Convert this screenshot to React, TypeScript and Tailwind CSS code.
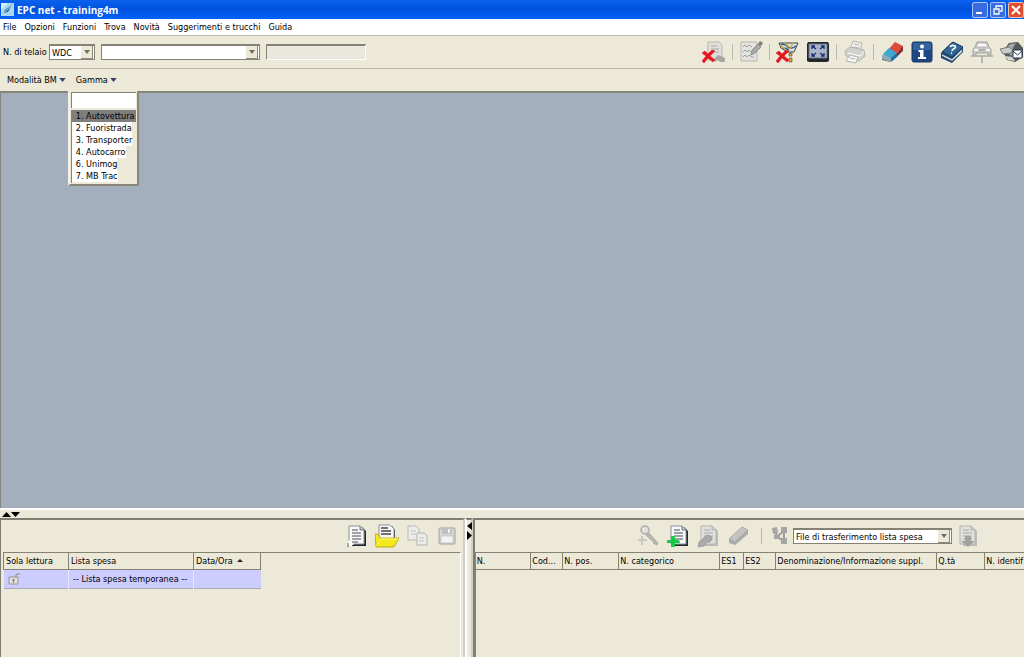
import { ReactNode } from "react";

const menuItems = ["File", "Opzioni", "Funzioni", "Trova", "Novità", "Suggerimenti e trucchi", "Guida"];

const ranges = ["1. Autovettura", "2. Fuoristrada", "3. Transporter", "4. Autocarro", "6. Unimog", "7. MB Trac"];

const partColumns = [
  { label: "N.", width: "w-[55px]" },
  { label: "Cod...", width: "w-[32px]" },
  { label: "N. pos.", width: "w-[56px]" },
  { label: "N. categorico", width: "w-[101px]" },
  { label: "ES1", width: "w-[24px]" },
  { label: "ES2", width: "w-[32px]" },
  { label: "Denominazione/Informazione suppl.", width: "w-[161px]" },
  { label: "Q.tà", width: "w-[48px]" },
  { label: "N. identif", width: "" },
];

function IconButton({ label, children }: { label: string; children: ReactNode }) {
  return (
    <button aria-label={label} className="size-6 shrink-0">
      <svg viewBox="0 0 24 24" className="size-6" fill="none">
        {children}
      </svg>
    </button>
  );
}

function Separator() {
  return <div className="h-4 w-px shrink-0 bg-[#bdbaad]" />;
}

function RedCross() {
  return (
    <path
      d="M0 13l3-2 3 3 4-4 3 1-5 5 5 4-2 2-5-4-4 5-2-2 4-5z"
      fill="#e8141c"
      stroke="#e8141c"
      strokeWidth="0.5"
    />
  );
}

function PageShape({ faded = false }: { faded?: boolean }) {
  const ink = faded ? "#a9a9a9" : "#4b4b4b";
  return (
    <>
      <path d="M6 3h11l4 4v15H7z" fill={faded ? "#bcbcb8" : "#25282c"} />
      <path d="M4 2h11l4 4v14H4z" fill={faded ? "#e0e0de" : "#f6f8fa"} stroke={faded ? "#b4b4b0" : "#8b9299"} />
      <path d="M15 2v4h4" fill="#c9cdd1" stroke={ink} strokeWidth="0.7" />
      <path d="M7 6h6M7 9h9M7 12h9M7 15h9M7 18h6" stroke={ink} strokeWidth="1.2" />
    </>
  );
}

function ComboArrow() {
  return (
    <span className="pointer-events-none absolute top-0.5 right-0.5 bottom-px flex w-3 items-center justify-center border-r border-b border-[#8c897b] bg-[#ece9d8]">
      <svg viewBox="0 0 6 4" className="h-1 w-1.5">
        <path d="M0 0h6L3 4z" fill="#716e62" />
      </svg>
    </span>
  );
}

type ComboProps = { id: string; label: string; value: string; className: string };

function Combo({ id, label, value, className }: ComboProps) {
  return (
    <div className={`relative h-4 shrink-0 ${className}`}>
      <select
        id={id}
        aria-label={label}
        defaultValue={value}
        className="h-full w-full appearance-none border border-t-2 border-[#858274] bg-white pr-3 pl-0.5 leading-3"
      >
        <option value={value}>{value}</option>
      </select>
      <ComboArrow />
    </div>
  );
}

function DownTriangle() {
  return (
    <svg viewBox="0 0 8 5" className="h-1 w-[7px]">
      <path d="M0 0h8L4 5z" fill="#38406b" />
    </svg>
  );
}

function TitleBar() {
  return (
    <header className="flex h-[19px] shrink-0 items-center bg-linear-to-b from-[#0a62ee] via-[#0052dd] to-[#0262fb] pl-px">
      <svg viewBox="0 0 13 13" className="size-[13px]">
        <path d="M0 0h13v13H0z" fill="#a9d9ee" />
        <path d="M0 7L7 0H0z" fill="#d5f1f8" />
        <path d="M2 12l2-5 7-6-4 8-3 1z" fill="#1c6aa8" />
        <path d="M2 12l8-10" stroke="#ecfaff" strokeWidth="0.7" />
      </svg>
      <h1 className="ml-[3px] font-['Open_Sans','DejaVu_Sans',sans-serif] text-[10px] font-bold text-white">
        EPC net - training4m
      </h1>
      <div className="ml-auto flex gap-0.5">
        <button aria-label="Riduci a icona" className="size-4 rounded-xs border border-[#a9c4f8] bg-[#3a6be0]">
          <svg viewBox="0 0 14 14">
            <path d="M3 9h6v2H3z" fill="#fff" />
          </svg>
        </button>
        <button aria-label="Ripristina" className="size-4 rounded-xs border border-[#a9c4f8] bg-[#3a6be0]">
          <svg viewBox="0 0 14 14" fill="none" stroke="#fff" strokeWidth="1.3">
            <path d="M5 5V3h6v5H9" />
            <path d="M3 6h5v5H3z" />
          </svg>
        </button>
        <button aria-label="Chiudi" className="size-4 rounded-xs border border-[#f0c0ac] bg-[#df5030]">
          <svg viewBox="0 0 14 14" stroke="#fff" strokeWidth="2">
            <path d="M3 3l8 8M11 3l-8 8" />
          </svg>
        </button>
      </div>
    </header>
  );
}

function MainIcons() {
  return (
    <div className="ml-auto flex items-center gap-1.5">
      <IconButton label="Elimina documento">
        <path d="M6 2h11l3 3v15H6z" fill="#dededb" stroke="#b8b8b4" />
        <path d="M9 6h6M9 9h8M9 12h8" stroke="#aaa" />
        <path d="M12 19l4-4 3 1 4 2v4h-5l-2-2-3 2z" fill="#a7a7a6" />
        <RedCross />
      </IconButton>
      <Separator />
      <IconButton label="Modifica nota">
        <path d="M2 2h16v19H2z" fill="#e3e3e1" stroke="#b7b7b4" />
        <path d="M4 7l2-2 2 2 2-2 3 2M4 12l2-2 2 2 2-2 2 2M4 17l2-2 2 2 2-2 3 2h2" stroke="#9e9e9b" />
        <path d="M12 15l1-5 6-6 3 3-6 6z" fill="#a9a9a9" stroke="#858585" strokeWidth="0.8" />
        <path d="M19 4l2-3 3 2-2 3z" fill="#7b7b7b" />
      </IconButton>
      <Separator />
      <IconButton label="Elimina filtro">
        <path d="M3 3h19l-3 6-4 4h-5L6 9z" fill="#d8e0e4" />
        <path d="M3 3h19l-4 9h-6L5 8z" stroke="#3b4652" />
        <path d="M5 5c3-2 5 0 7 2s4 2 8-1M7 9c2-2 4 0 6 1" stroke="#2b5c8e" strokeWidth="1.5" />
        <path d="M4 5l5 4M17 3l-3 6M9 3l4 4" stroke="#d6b02d" strokeWidth="1.3" />
        <path d="M13 13h3v3h-3zM13 18h3v4h-3z" fill="#d7a62f" stroke="#4c4b3d" strokeWidth="0.6" />
        <RedCross />
      </IconButton>
      <IconButton label="Schermo intero">
        <path d="M2 2h20l1 2v17l-2 1H3l-2-1V4z" fill="#23262b" />
        <path d="M3 4h18v14H3z" fill="#aab5c9" stroke="#697386" />
        <path
          d="M10 9L6 6M6 9V6h3M14 9l4-3M15 6h3v3M10 13l-4 3M6 13v3h3M14 13l4 3M15 16h3v-3"
          stroke="#18316b"
          strokeWidth="1.3"
        />
      </IconButton>
      <Separator />
      <IconButton label="Stampa">
        <path d="M10 1l9 2-2 8-10-2z" fill="#efefed" stroke="#b4b4b1" />
        <path d="M2 11l5-4 14 3 1 6-6 5-13-5z" fill="#d2d2cf" stroke="#b4b4b1" />
        <path d="M5 13l12 3 4-4" stroke="#fff" />
        <path d="M7 15l8 2-2 6-10-2z" fill="#f4f4f2" stroke="#b4b4b1" />
        <path d="M11 4l5 1M10 7l6 1M7 18l5 1" stroke="#b4b4b1" />
      </IconButton>
      <Separator />
      <IconButton label="Cancella">
        <path d="M2 17L15 3l8 4v4L10 22l-8-2z" fill="#686b70" />
        <path d="M9 9l6-7 8 4-6 8z" fill="#dc4b3d" />
        <path d="M17 14l6-8v4l-6 7z" fill="#8d2928" />
        <path d="M3 14l6-6 8 5-6 6z" fill="#3caad0" />
        <path d="M17 13v4l-6 5v-4z" fill="#246ca2" />
        <path d="M3 14l8 4v4l-9-3v-3z" fill="#8fa9b8" />
      </IconButton>
      <IconButton label="Informazioni">
        <rect x="2" y="2" width="20" height="20" rx="2" fill="#1c4784" stroke="#183866" />
        <path d="M3 3h18v7H3z" fill="#35639e" />
        <circle cx="12" cy="6.5" r="2" fill="#fff" />
        <path d="M8.500 10h5v7H16v2H8v-2h2v-5H8.500z" fill="#fff" />
      </IconButton>
      <IconButton label="Guida">
        <path d="M1 13L12 2l11 5v5L12 23 1 18z" fill="#1e4672" />
        <path d="M2 14l10 5L22 9v3l-10 9-10-5z" fill="#e4e9ed" stroke="#4e5f70" strokeWidth="0.6" />
        <path d="M2 12L13 2l10 5-11 10z" fill="#326795" stroke="#193d62" />
        <path d="M10 7c2-3 7-1 5 1-1 1-3 1-3 3M11 13h1" stroke="#fff" strokeWidth="1.6" />
      </IconButton>
      <IconButton label="Veicolo">
        <path d="M7 2h10l2 5 2 2v6h-3v-2H6v2H3V9l2-2z" fill="#c9c9c6" stroke="#a2a29f" />
        <path d="M8 3h8l2 4H6z" fill="#f7f7f5" stroke="#aaa" strokeWidth="0.7" />
        <path d="M4 9h4v2H4zM16 9h4v2h-4z" fill="#f4f4f2" />
        <path d="M9 10h6" stroke="#8e8e8b" />
        <path d="M1 16h22M12 16v7" stroke="#aaa9a5" strokeWidth="1.6" />
      </IconButton>
      <IconButton label="Invia">
        <path d="M9 3l9-1 5 6v9l-8 5-8-2-4-9z" fill="#565957" />
        <path d="M10 4l6-1-3 5v9l-4-3-4-5z" fill="#a9adac" stroke="#70726f" />
        <path d="M0 9l9-2 4 3-2 3-8 1z" fill="#c9ccca" stroke="#777a77" />
        <path d="M5 16l8 1 2 4-7-1z" fill="#d5d7d5" />
        <path d="M13 10h9v8h-9z" fill="#fff" stroke="#263752" />
        <path d="M13 11l4.500 4 4.500-4" stroke="#263752" />
      </IconButton>
    </div>
  );
}

function RangeMenu() {
  return (
    <div className="absolute top-full left-0 z-10 w-[71px] border-2 border-t-0 border-[#f4f2e7] border-r-[#8a8778] border-b-[#8a8778] bg-[#ece9d8] p-px">
      <input
        aria-label="Filtro gamma"
        className="block h-4 w-full border-t border-l border-[#858274] bg-white"
      />
      <ul className="mt-0.5 border-l border-[#858274] pb-px">
        {ranges.map((range, index) => (
          <li key={range} className={`flex h-3 ${index === 0 ? "bg-[#7e7e7e]" : ""}`}>
            <button className={`h-3 pl-1 leading-3 whitespace-nowrap ${index === 0 ? "" : "bg-white"}`}>
              {range}
            </button>
          </li>
        ))}
      </ul>
    </div>
  );
}

function ShoppingLists() {
  return (
    <section className="flex min-w-0 flex-[5] flex-col border-t-2 border-r-2 border-l border-[#807e73] border-r-[#d0cfc6] pr-0.5 pl-0.5">
      <div className="flex h-8 shrink-0 items-center justify-end gap-1.5 pr-0.5">
        <IconButton label="Nuova lista">
          <PageShape />
          <path d="M1 22l3-6 2 2 3 2-3 2z" fill="#fff" />
          <path d="M3 21v-2M2 22h2" stroke="#555" />
        </IconButton>
        <IconButton label="Apri lista">
          <path d="M6 2h11l3 4v14H6z" fill="#25282c" />
          <path d="M4 1h11l4 4v14H4z" fill="#f5f7fa" stroke="#8b9299" />
          <path d="M6 4h7M6 7h10M6 10h10" stroke="#444" strokeWidth="1.3" />
          <path d="M0 10h3l2 4h19l-5 9H1z" fill="#f1e91c" stroke="#bcae1c" />
          <path d="M2 21l4-6h17" stroke="#fffa78" />
        </IconButton>
        <IconButton label="Copia">
          <path d="M3 2h8l3 3v11H3z" fill="#ecedeb" stroke="#bbbbb8" />
          <path d="M12 9h7l3 3v9H12z" fill="#ecedeb" stroke="#b4b4b1" />
          <path d="M6 7h5M6 10h5M14 14h5M14 17h5" stroke="#c1c1be" />
        </IconButton>
        <IconButton label="Salva">
          <rect x="4" y="4" width="16" height="16" rx="1" fill="#d6d6d4" stroke="#a1a19e" />
          <path d="M7 4h10v6H7z" fill="#bfc1c0" />
          <path d="M13 5h2v4h-2z" fill="#f1f1f0" />
          <path d="M6 12h12v7H6z" fill="#f2f2f1" stroke="#bdbdbb" strokeWidth="0.7" />
        </IconButton>
      </div>
      <div className="flex-1 border-t border-r border-[#858274] border-r-white">
        <table className="table-fixed border-collapse text-left">
          <thead>
            <tr className="h-4 border-b border-[#858274]">
              <th className="w-[65px] border-r border-l border-[#858274] pl-0.5 font-normal">Sola lettura</th>
              <th className="w-[125px] border-r border-[#858274] pl-0.5 font-normal">Lista spesa</th>
              <th className="w-[67px] border-r border-[#858274] pl-0.5 font-normal">
                <span className="flex items-center gap-1">
                  Data/Ora
                  <svg viewBox="0 0 6 3" className="h-[3px] w-1.5">
                    <path d="M0 3h6L3 0z" fill="#222" />
                  </svg>
                </span>
              </th>
            </tr>
          </thead>
          <tbody>
            <tr className="h-[19px] border-b border-[#a9a8bb] bg-[#ccccff]">
              <td className="border-r border-[#e7e6f4] pl-1">
                <svg viewBox="0 0 13 12" className="h-3 w-[13px]" fill="none">
                  <path d="M1 4h9v7H1z" fill="#e2e0dc" stroke="#96948e" />
                  <path d="M8 4V2c1-2 3-1 4-1M5.500 6v4M4 7h3" stroke="#89877f" />
                </svg>
              </td>
              <td className="border-r border-[#e7e6f4] pl-1 whitespace-nowrap">-- Lista spesa temporanea --</td>
              <td />
            </tr>
          </tbody>
        </table>
      </div>
    </section>
  );
}

function PartsList() {
  return (
    <section className="flex min-w-0 flex-[6] flex-col overflow-hidden border-t-2 border-l-2 border-[#807e73]">
      <div className="flex h-8 shrink-0 items-center justify-end gap-1.5 pr-11">
        <IconButton label="Cerca codice">
          <path d="M11 8l10 11-1 2-4-2 1-2-3-1-6-6z" fill="#b7b7b5" stroke="#9b9b99" strokeWidth="0.7" />
          <circle cx="8" cy="6" r="4" fill="#dededc" stroke="#adadab" strokeWidth="1.5" />
          <circle cx="7" cy="5" r="1" fill="#f5f4ed" />
          <path d="M5 12v9M1 16h9" stroke="#c7c7c5" strokeWidth="2" />
        </IconButton>
        <IconButton label="Aggiungi alla lista">
          <PageShape />
          <path d="M4 12h4v4h4v3H8v4H4v-4H0v-3h4z" fill="#1bc94a" />
        </IconButton>
        <IconButton label="Modifica posizione">
          <PageShape faded />
          <path d="M2 18l8-7 5 2-1 4-4 1-3 4-6 1z" fill="#aaaaaa" stroke="#929290" strokeWidth="0.7" />
        </IconButton>
        <IconButton label="Cancella posizione">
          <path d="M2 15L15 3l6 3v4L8 21l-6-2z" fill="#a9a9a7" />
          <path d="M2 15L15 3l6 3L8 18z" fill="#c3c3c1" stroke="#9d9d9b" strokeWidth="0.7" />
        </IconButton>
        <div className="ml-1">
          <Separator />
        </div>
        <div className="flex items-center gap-px">
          <IconButton label="Trasferisci">
            <path d="M7 6l2 7 7 4M16 7v10M8 13l7-5" stroke="#9c9c99" strokeWidth="2" />
            <path d="M4 4l5-1 1 6-5 1zM13 3h6v6h-6zM6 11h6v4H6zM13 14h6v6h-6z" fill="#a5a5a3" />
          </IconButton>
          <Combo
            id="transfer-file"
            label="File di trasferimento"
            value="File di trasferimento lista spesa"
            className="mr-[3px] w-[159px]"
          />
          <IconButton label="Importa">
            <PageShape faded />
            <path d="M9 12h6v5h4l-7 6-7-6h4z" fill="#a2a2a1" />
          </IconButton>
        </div>
      </div>
      <div className="flex-1 border-t border-l border-[#858274]">
        <table className="w-full table-fixed border-collapse text-left">
          <thead>
            <tr className="h-4 border-b border-[#858274]">
              {partColumns.map((col) => (
                <th
                  key={col.label}
                  className={`overflow-hidden border-r border-[#858274] pl-px font-normal whitespace-nowrap last:border-r-0 ${col.width}`}
                >
                  {col.label}
                </th>
              ))}
            </tr>
          </thead>
        </table>
      </div>
    </section>
  );
}

export default function App() {
  return (
    <div className="flex h-screen flex-col overflow-hidden bg-[#ece9d8] font-['DejaVu_Sans_Condensed','Liberation_Sans',sans-serif] text-[9px] leading-3 text-black">
      <TitleBar />
      <nav className="flex h-[17px] shrink-0 items-center gap-2 border-b border-[#bdbaad] bg-white pl-[3px]">
        {menuItems.map((item) => (
          <button key={item}>{item}</button>
        ))}
      </nav>
      <div className="flex h-[33px] shrink-0 items-center border-b border-[#bdbaad] pl-[3px]">
        <label htmlFor="chassis-prefix" className="w-[46px] shrink-0 whitespace-nowrap">
          N. di telaio
        </label>
        <Combo id="chassis-prefix" label="Prefisso telaio" value="WDC" className="mr-1.5 w-[46px]" />
        <Combo id="chassis-number" label="Numero di telaio" value="" className="mr-1.5 w-[159px]" />
        <input
          aria-label="Descrizione"
          readOnly
          className="h-4 w-[100px] border border-t-2 border-[#858274] border-r-white border-b-white bg-[#eae8de]"
        />
        <MainIcons />
      </div>
      <div className="flex h-[22px] shrink-0 pl-[7px]">
        <button className="flex items-center gap-0.5">
          Modalità BM
          <DownTriangle />
        </button>
        <div className="relative ml-0.5 flex">
          <button className="flex items-center gap-0.5 pl-2">
            Gamma
            <DownTriangle />
          </button>
          <RangeMenu />
        </div>
      </div>
      <main className="flex flex-[3] flex-col">
        <div className="flex-1 border-t-2 border-l border-[#858579] bg-[#a4afbe]" />
      </main>
      <div className="flex h-2.5 shrink-0 items-center border-t-2 border-white pl-0.5">
        <svg viewBox="0 0 18 5" className="h-[5px] w-[18px]">
          <path d="M0 5h9L4.500 0zM9 0h9l-4.500 5z" fill="#000" />
        </svg>
      </div>
      <div className="flex min-h-0 flex-1">
        <ShoppingLists />
        <div className="w-2 shrink-0 border-t-2 border-r-2 border-l-2 border-white border-t-[#807e73] border-r-[#d0cfc6] pt-0.5">
          <svg viewBox="0 0 5 18" className="h-[18px] w-[5px]">
            <path d="M5 0v8L0 4zM0 9v9l5-4.500z" fill="#000" />
          </svg>
        </div>
        <PartsList />
      </div>
    </div>
  );
}
